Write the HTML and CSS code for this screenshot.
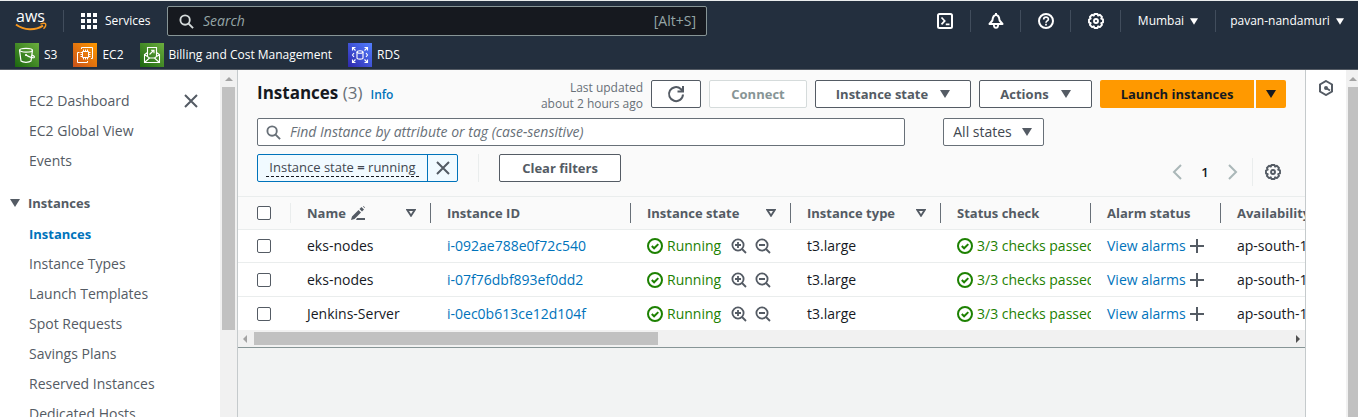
FILE: index.html
```html
<!DOCTYPE html>
<html lang="en">
<head>
<meta charset="utf-8">
<title>Instances | EC2 | Mumbai</title>
<link rel="stylesheet" href="styles.css">
</head>
<body>
<svg class="defs" aria-hidden="true">
  <symbol id="caret" viewBox="0 0 10 8"><path d="M0 0h10L5 8z" fill="currentColor"/></symbol>
  <symbol id="sort" viewBox="0 0 10 8"><path d="M1.300 1h7.400L5 6.800z" fill="none" stroke="currentColor" stroke-width="1.800"/></symbol>
  <symbol id="search" viewBox="0 0 16 16"><g fill="none" stroke="currentColor" stroke-width="2"><circle cx="6.500" cy="6.500" r="5"/><path d="M10.200 10.200 15 15"/></g></symbol>
  <symbol id="close" viewBox="0 0 16 16"><path d="m2 2 12 12M14 2 2 14" fill="none" stroke="currentColor" stroke-width="2"/></symbol>
  <symbol id="gear" viewBox="0 0 16 16"><g fill="none" stroke="currentColor"><path stroke-width="1.900" stroke-linejoin="round" d="M6.500 1h3l.6 1.600 1.700-.8 2.200 2.100-.8 1.700 1.800.8v3l-1.800.7.8 1.800-2.100 2.200-1.800-.8-.6 1.700h-3l-.7-1.700-1.700.8-2.200-2.200.8-1.800L1 9.500v-3l1.700-.8-.8-1.800 2.200-2.100 1.700.8z"/><circle cx="8" cy="8" r="2" stroke-width="1.900"/></g></symbol>
  <symbol id="ok" viewBox="0 0 16 16"><g fill="none" stroke="currentColor" stroke-width="2"><circle cx="8" cy="8" r="7"/><path d="m4.800 8 2.300 2.300 4.200-4.200"/></g></symbol>
  <symbol id="zoom-in" viewBox="0 0 16 16"><g fill="none" stroke="currentColor" stroke-width="1.800"><circle cx="7" cy="7" r="5.600"/><path d="m11 11 4 4M4 7h6M7 4v6"/></g></symbol>
  <symbol id="zoom-out" viewBox="0 0 16 16"><g fill="none" stroke="currentColor" stroke-width="1.800"><circle cx="7" cy="7" r="5.600"/><path d="m11 11 4 4M4 7h6"/></g></symbol>
  <symbol id="plus" viewBox="0 0 14 14"><path d="M7 0v14M0 7h14" fill="none" stroke="currentColor" stroke-width="2"/></symbol>
  <linearGradient id="green" x1="0" y1="1" x2="1" y2="0"><stop stop-color="#1b660f"/><stop offset="1" stop-color="#6cae3e"/></linearGradient>
  <linearGradient id="orange" x1="0" y1="1" x2="1" y2="0"><stop stop-color="#c8511b"/><stop offset="1" stop-color="#ff9900"/></linearGradient>
  <linearGradient id="blue" x1="0" y1="1" x2="1" y2="0"><stop stop-color="#2e27ad"/><stop offset="1" stop-color="#527fff"/></linearGradient>
</svg>

<header class="top">
  <div class="bar">
    <a class="logo" href="#" aria-label="AWS home">
      <svg width="34" height="24" viewBox="0 0 34 24"><text x="1" y="13" class="logo-text">aws</text><path d="M1 15.500c8 6 19 6.500 27 1.200" fill="none" stroke="#f7981f" stroke-width="2"/><path d="M25.500 15.200c2-1 4.500-1 5-.5.5 1-.4 3.500-2 5" fill="none" stroke="#f7981f" stroke-width="1.400"/></svg>
    </a>
    <span class="rule"></span>
    <button class="services">
      <svg width="16" height="16" viewBox="0 0 16 16" fill="#fff"><path d="M0 0h4v4H0zM6 0h4v4H6zM12 0h4v4h-4zM0 6h4v4H0zM6 6h4v4H6zM12 6h4v4h-4zM0 12h4v4H0zM6 12h4v4H6zM12 12h4v4h-4z"/></svg>
      Services
    </button>
    <label class="global-search">
      <svg width="15" height="15"><use href="#search"/></svg>
      <input type="search" placeholder="Search" aria-label="Search">
      <span>[Alt+S]</span>
    </label>
    <nav class="tools" aria-label="Account tools">
      <button class="tool" aria-label="CloudShell"><svg width="16" height="16" viewBox="0 0 16 16" fill="none" stroke="#fff" stroke-width="2"><rect x="1" y="1" width="14" height="14" rx="1.500"/><path d="m4.500 4.500 3.200 3.400-3.200 3.400M8.800 11.300h3.700" stroke-width="1.700"/></svg></button>
      <button class="tool" aria-label="Notifications"><svg width="16" height="16" viewBox="0 0 16 16" fill="none" stroke="#fff" stroke-width="2"><path d="M8 0v2M1.500 11h13L11.600 7.500C11.200 4 10.200 2 8 2S4.800 4 4.400 7.500z" stroke-linejoin="round"/><path d="M5.800 11.500c0 4.500 4.400 4.500 4.400 0" stroke-width="1.800"/></svg></button>
      <button class="tool" aria-label="Help"><svg width="16" height="16" viewBox="0 0 16 16" fill="none" stroke="#fff" stroke-width="2"><circle cx="8" cy="8" r="7"/><path d="M5.700 6.400c0-3 4.700-2.900 4.700-.2C10.400 8 8 7.800 8 9.700M8 10.800v1.700" stroke-width="1.700"/></svg></button>
      <button class="tool" aria-label="Settings"><svg width="16" height="16"><use href="#gear"/></svg></button>
      <button class="region">Mumbai <svg width="8" height="7"><use href="#caret"/></svg></button>
      <button class="account">pavan-nandamuri <svg width="8" height="7"><use href="#caret"/></svg></button>
    </nav>
  </div>
  <nav class="favorites" aria-label="Favorites">
    <a href="#"><svg width="24" height="24" viewBox="0 0 24 24" fill="none" stroke="#fff" stroke-width="1.200"><path stroke="none" fill="url(#green)" d="M0 0h24v24H0z"/><path d="M4.500 7.200 6 18c2 1.700 8 1.700 10 0l1.500-10.800"/><ellipse cx="11" cy="7.200" rx="6.500" ry="1.900"/><path d="M11 12c3 2 7.500 3.500 8.300 2.300.5-.9-1-1.700-2.400-2.200"/><circle cx="11" cy="12" r=".5"/></svg>S3</a>
    <a href="#"><svg width="24" height="24" viewBox="0 0 24 24" fill="none" stroke="#fff"><path stroke="none" fill="url(#orange)" d="M0 0h24v24H0z"/><path d="M9.500 8.500h6v6h-6zM10.500 6.500v2M12.500 6.500v2M14.500 6.500v2M10.500 14.500v2M12.500 14.500v2M14.500 14.500v2M7.500 9.500h2M7.500 11.500h2M7.500 13.500h2M15.500 9.500h2M15.500 11.500h2M15.500 13.500h2M8.500 6V4.500h11v11H18M6.500 9.500h-2v10h10V18"/></svg>EC2</a>
    <a href="#"><svg width="24" height="24" viewBox="0 0 24 24" fill="none" stroke="#fff" stroke-width="1.100"><path stroke="none" fill="url(#green)" d="M0 0h24v24H0z"/><path d="M7.500 13V4.500h9V13M7.500 9.500l-3 2v8h15v-8l-3-2M4.500 11.500l5 3.500h5l5-3.500M4.500 19.500l5-4.500M19.500 19.500l-5-4.500M9.500 11.500l4-4M11 7.200h3v3"/></svg>Billing and Cost Management</a>
    <a href="#"><svg width="24" height="24" viewBox="0 0 24 24" fill="none" stroke="#fff" stroke-width="1.100"><path stroke="none" fill="url(#blue)" d="M0 0h24v24H0z"/><path d="M4.500 7.500v-3h3M4.500 4.500l3 3M16.500 4.500h3v3M19.500 4.500l-3 3M4.500 16.500v3h3M4.500 19.500l3-3M19.500 16.500v3h-3M19.500 19.500l-3-3M6 10l-1.500 2L6 14M18 10l1.500 2-1.500 2M9 9v6c0 1.500 6 1.500 6 0V9"/><ellipse cx="12" cy="9" rx="3" ry="1.200"/></svg>RDS</a>
  </nav>
</header>

<div class="layout">
  <nav class="side" aria-label="EC2">
    <button class="side-close" aria-label="Close navigation"><svg width="16" height="16"><use href="#close"/></svg></button>
    <ul>
      <li><a href="#">EC2 Dashboard</a></li>
      <li><a href="#">EC2 Global View</a></li>
      <li><a href="#">Events</a></li>
    </ul>
    <button class="section"><svg width="10" height="8"><use href="#caret"/></svg>Instances</button>
    <ul>
      <li><a class="current" href="#">Instances</a></li>
      <li><a href="#">Instance Types</a></li>
      <li><a href="#">Launch Templates</a></li>
      <li><a href="#">Spot Requests</a></li>
      <li><a href="#">Savings Plans</a></li>
      <li><a href="#">Reserved Instances</a></li>
      <li><a href="#">Dedicated Hosts</a></li>
    </ul>
  </nav>
  <div class="vscroll"><svg width="8" height="4"><path d="M0 4h8L4 0z" fill="#a3a3a3"/></svg><div class="vthumb"></div></div>

  <main class="main">
    <section class="panel">
      <div class="panel-head">
        <div class="title-row">
          <h1>Instances <span>(3)</span></h1>
          <a class="info" href="#">Info</a>
          <p class="updated">Last updated<br>about 2 hours ago</p>
          <div class="actions">
            <button class="btn refresh" aria-label="Refresh"><svg width="18" height="18" viewBox="0 0 18 18" fill="none" stroke="currentColor" stroke-width="2"><path d="M16 9.500A7 7 0 1 1 13.800 4l1.700 1.600M16 1v5.500h-5.500"/></svg></button>
            <button class="btn connect" disabled>Connect</button>
            <button class="btn state">Instance state <svg width="10" height="8"><use href="#caret"/></svg></button>
            <button class="btn acts">Actions <svg width="10" height="8"><use href="#caret"/></svg></button>
            <div class="split">
              <button class="launch">Launch instances</button>
              <button class="launch-more" aria-label="More launch options"><svg width="10" height="8"><use href="#caret"/></svg></button>
            </div>
          </div>
        </div>
        <div class="search-row">
          <label class="find">
            <svg width="15" height="15"><use href="#search"/></svg>
            <input type="search" placeholder="Find Instance by attribute or tag (case-sensitive)" aria-label="Find Instance">
          </label>
          <div class="states">
            <select aria-label="Instance states"><option>All states</option></select>
            <svg width="10" height="8"><use href="#caret"/></svg>
          </div>
        </div>
        <div class="filter-row">
          <div class="token">
            <button class="token-text"><span>Instance state <b>=</b> running</span></button>
            <button class="token-x" aria-label="Remove filter"><svg width="16" height="16"><use href="#close"/></svg></button>
          </div>
          <span class="split-line"></span>
          <button class="btn clear">Clear filters</button>
          <nav class="pages" aria-label="Pagination">
            <button aria-label="Previous page" disabled><svg width="10" height="16" viewBox="0 0 10 16" fill="none" stroke="#aab7b8" stroke-width="2"><path d="M9 1 2 8l7 7"/></svg></button>
            <button class="page">1</button>
            <button aria-label="Next page" disabled><svg width="10" height="16" viewBox="0 0 10 16" fill="none" stroke="#aab7b8" stroke-width="2"><path d="m1 1 7 7-7 7"/></svg></button>
            <span class="split-line"></span>
            <button aria-label="Preferences"><svg width="16" height="16"><use href="#gear"/></svg></button>
          </nav>
        </div>
      </div>

      <div class="table-wrap">
        <table>
          <colgroup><col class="c-check"><col class="c-name"><col class="c-id"><col class="c-state"><col class="c-type"><col class="c-status"><col class="c-alarm"><col class="c-zone"></colgroup>
          <thead>
            <tr>
              <th><div class="th pale"><input type="checkbox" aria-label="Select all"></div></th>
              <th><div class="th">Name <svg class="pen" width="14" height="14" viewBox="0 0 14 14"><path d="m0 14 1-3.500L7.500 4 10 6.500 3.500 13zM8.500 3l2-2L13 3.500l-2 2zM12.500 0 14 1.500l-.5.5L12 .5zM6 12h8v2H5z" fill="currentColor"/></svg><svg class="sort" width="10" height="8"><use href="#sort"/></svg></div></th>
              <th><div class="th">Instance ID</div></th>
              <th><div class="th">Instance state<svg class="sort" width="10" height="8"><use href="#sort"/></svg></div></th>
              <th><div class="th">Instance type<svg class="sort" width="10" height="8"><use href="#sort"/></svg></div></th>
              <th><div class="th">Status check</div></th>
              <th><div class="th">Alarm status</div></th>
              <th><div class="th">Availability Zone</div></th>
            </tr>
          </thead>
          <tbody>
            <tr>
              <td><input type="checkbox" aria-label="Select i-092ae788e0f72c540"></td>
              <td>eks-nodes</td>
              <td><a href="#">i-092ae788e0f72c540</a></td>
              <td><div class="cell"><svg class="good" width="16" height="16"><use href="#ok"/></svg><span class="good">Running</span><button aria-label="Filter for value"><svg width="16" height="16"><use href="#zoom-in"/></svg></button><button aria-label="Filter out value"><svg width="16" height="16"><use href="#zoom-out"/></svg></button></div></td>
              <td>t3.large</td>
              <td><div class="cell clip good"><svg width="16" height="16"><use href="#ok"/></svg><span>3/3 checks passed</span></div></td>
              <td><div class="cell"><a href="#">View alarms</a><button aria-label="Create alarm"><svg width="14" height="14"><use href="#plus"/></svg></button></div></td>
              <td>ap-south-1b</td>
            </tr>
            <tr>
              <td><input type="checkbox" aria-label="Select i-07f76dbf893ef0dd2"></td>
              <td>eks-nodes</td>
              <td><a href="#">i-07f76dbf893ef0dd2</a></td>
              <td><div class="cell"><svg class="good" width="16" height="16"><use href="#ok"/></svg><span class="good">Running</span><button aria-label="Filter for value"><svg width="16" height="16"><use href="#zoom-in"/></svg></button><button aria-label="Filter out value"><svg width="16" height="16"><use href="#zoom-out"/></svg></button></div></td>
              <td>t3.large</td>
              <td><div class="cell clip good"><svg width="16" height="16"><use href="#ok"/></svg><span>3/3 checks passed</span></div></td>
              <td><div class="cell"><a href="#">View alarms</a><button aria-label="Create alarm"><svg width="14" height="14"><use href="#plus"/></svg></button></div></td>
              <td>ap-south-1b</td>
            </tr>
            <tr>
              <td><input type="checkbox" aria-label="Select i-0ec0b613ce12d104f"></td>
              <td>Jenkins-Server</td>
              <td><a href="#">i-0ec0b613ce12d104f</a></td>
              <td><div class="cell"><svg class="good" width="16" height="16"><use href="#ok"/></svg><span class="good">Running</span><button aria-label="Filter for value"><svg width="16" height="16"><use href="#zoom-in"/></svg></button><button aria-label="Filter out value"><svg width="16" height="16"><use href="#zoom-out"/></svg></button></div></td>
              <td>t3.large</td>
              <td><div class="cell clip good"><svg width="16" height="16"><use href="#ok"/></svg><span>3/3 checks passed</span></div></td>
              <td><div class="cell"><a href="#">View alarms</a><button aria-label="Create alarm"><svg width="14" height="14"><use href="#plus"/></svg></button></div></td>
              <td>ap-south-1b</td>
            </tr>
          </tbody>
        </table>
      </div>
      <div class="hscroll"><svg width="4" height="8"><path d="M4 0v8L0 4z" fill="#a3a3a3"/></svg><div class="htrack"><div class="hthumb"></div></div><svg width="4" height="8"><path d="M0 0v8l4-4z" fill="#505050"/></svg></div>
    </section>
  </main>

  <aside class="rail">
    <button aria-label="Open tools"><svg width="16" height="16" viewBox="0 0 16 16" fill="none" stroke="#545b64" stroke-width="2"><path d="M8 1l6 3.500v7L8 15l-6-3.500v-7z"/><circle cx="8" cy="8" r="1"/><path d="m8 8 4 2.500"/></svg></button>
  </aside>
  <div class="vscroll page-scroll"><svg width="8" height="4"><path d="M0 4h8L4 0z" fill="#a3a3a3"/></svg><div class="vthumb"></div></div>
</div>
</body>
</html>
```

FILE: styles.css
```css
* { box-sizing: border-box; }
body {
  margin: 0;
  height: 100vh;
  display: flex;
  flex-direction: column;
  overflow: hidden;
  font: 13px/20px "Open Sans", "Noto Sans", sans-serif;
  color: #16191f;
  background: #f2f3f3;
}
button, input, select { font: inherit; color: inherit; margin: 0; }
button { background: none; border: 0; padding: 0; cursor: pointer; }
a { color: #0073bb; text-decoration: none; }
svg { display: block; flex: none; }
ul { list-style: none; margin: 0; padding: 0; }
h1, p { margin: 0; }
input[type="search"] { appearance: none; border: 0; outline: 0; background: none; padding: 0; flex: 1; min-width: 0; font-size: 14px; }
input[type="search"]::placeholder { font-style: italic; color: #687078; opacity: 1; }
input[type="checkbox"] { appearance: none; display: block; width: 14px; height: 14px; border: 1px solid #545b64; border-radius: 2px; background: #fff; }
.defs { position: absolute; width: 0; height: 0; }

/* Global header */
.top { flex: none; background: #232f3e; color: #fff; border-top: 1px solid #eaeded; border-bottom: 1px solid #545b64; }
.bar { display: flex; align-items: center; height: 40px; }
.logo { margin-left: 15px; width: 48px; }
.logo-text { font: 500 16px "Open Sans", sans-serif; fill: #fff; }
.rule { width: 1px; height: 22px; background: #414d5c; }
.services { display: flex; align-items: center; gap: 8px; margin-left: 17px; width: 86px; font-weight: 500; font-size: 12px; }
.global-search { display: flex; align-items: center; flex: 0 1 540px; height: 30px; padding: 0 10px 0 11px; gap: 9px; border: 1px solid #879596; border-radius: 2px; background: #16191f; color: #d5dbdb; }
.global-search input::placeholder { color: #95a5a6; }
.global-search span { color: #95a5a6; font-size: 14px; }
.tools { display: flex; align-items: center; margin-left: auto; }
.tools button { display: flex; align-items: center; justify-content: center; height: 22px; border-left: 1px solid #414d5c; }
.tools .tool { width: 50px; }
.tools .tool:first-child { border-left: 0; }
.region, .account { font-size: 12px; gap: 6px; }
.tools .region { width: 95px; }
.tools .account { width: 143px; }
.favorites { display: flex; gap: 16px; padding: 2px 15px 2px; }
.favorites a { display: flex; align-items: center; gap: 5px; color: #fff; font-size: 12px; font-weight: 500; }

/* Page columns */
.layout { flex: 1; min-height: 0; display: flex; }
.side { position: relative; flex: 0 0 220px; overflow: hidden; background: #fff; padding-top: 16px; color: #545b64; }
.side a { display: block; padding: 5px 29px; color: #545b64; font-size: 14px; }
.side a.current { color: #0073bb; font-size: 13px; font-weight: 700; }
.side-close { position: absolute; top: 23px; right: 21px; color: #545b64; }
.section { display: flex; align-items: center; gap: 8px; padding: 17px 10px 6px; font-weight: 700; line-height: 20px; }
.vscroll { flex: 0 0 17px; display: flex; flex-direction: column; align-items: center; gap: 6px; padding-top: 7px; background: #f1f1f1; }
.vthumb { width: 13px; height: 243px; background: #c1c1c1; }
.page-scroll { flex-basis: 12px; padding-left: 2px; overflow: hidden; }
.page-scroll .vthumb { flex: 1; width: 100%; }
.main { flex: 1; min-width: 0; border: solid #c5cacc; border-width: 0 1px; overflow: hidden; }
.rail { flex: 0 0 40px; background: #fff; padding: 10px 0 0 12px; }

/* Instances panel */
.panel { border-bottom: 1px solid #879596; }
.panel-head { background: #fafafa; padding: 10px 19px 10px; border-bottom: 1px solid #eaeded; }
.title-row { display: flex; height: 38px; }
h1 { font-size: 17px; line-height: 26px; font-weight: 700; }
h1 span { color: #687078; font-weight: 400; }
.info { margin-left: 8px; font-size: 12px; line-height: 30px; font-weight: 600; }
.updated { margin-left: auto; font-size: 12px; line-height: 16px; color: #687078; text-align: right; }
.actions { display: flex; gap: 8px; margin-left: 8px; }
.btn { display: flex; align-items: center; justify-content: center; gap: 12px; height: 28px; border: 1px solid #545b64; border-radius: 2px; background: #fff; color: #545b64; font-weight: 700; white-space: nowrap; }
.btn:disabled { border-color: #d5dbdb; color: #879596; }
.refresh { width: 50px; }
.connect { width: 98px; }
.state { width: 156px; }
.acts { width: 113px; }
.split { display: flex; gap: 2px; }
.split button { display: flex; align-items: center; justify-content: center; height: 28px; background: #ff9900; color: #16191f; font-weight: 700; white-space: nowrap; }
.split .launch { width: 154px; border-radius: 2px 0 0 2px; }
.split .launch-more { width: 30px; border-radius: 0 2px 2px 0; }
.search-row { display: flex; gap: 38px; margin-bottom: 8px; }
.find { flex: 0 1 63%; display: flex; align-items: center; gap: 9px; height: 28px; padding: 0 8px; border: 1px solid #687078; border-radius: 2px; background: #fff; color: #687078; }
.states { position: relative; }
.states select { appearance: none; width: 101px; height: 28px; padding: 0 9px; border: 1px solid #687078; border-radius: 2px; background: #fff; color: #414750; font-size: 14px; }
.states svg { position: absolute; right: 12px; top: 10px; color: #545b64; pointer-events: none; }
.filter-row { display: flex; height: 32px; }
.token { display: flex; height: 28px; border: 1px solid #0073bb; border-radius: 2px; background: #f1faff; color: #414750; }
.token-text { width: 169px; }
.token-text span { display: block; margin: 0 8px; line-height: 17px; border-bottom: 1px dashed #16191f; white-space: nowrap; }
.token-x { width: 30px; display: flex; align-items: center; justify-content: center; border-left: 1px solid #0073bb; color: #545b64; }
.split-line { width: 1px; height: 28px; background: #eaeded; margin: 0 20px; }
.clear { width: 122px; }
.pages { display: flex; align-items: center; gap: 18px; height: 28px; margin: 4px 5px 0 auto; color: #545b64; }
.pages .page { width: 10px; color: #16191f; font-weight: 600; }
.pages .split-line { margin: 0 -6px 0 -4px; }

/* Table */
.table-wrap { overflow: hidden; background: #fff; }
table { table-layout: fixed; width: 1133px; border-collapse: separate; border-spacing: 0; }
.c-check { width: 53px; }
.c-name { width: 140px; }
.c-id { width: 200px; }
.c-state { width: 160px; }
.c-type, .c-status, .c-zone { width: 150px; }
.c-alarm { width: 130px; }
th { padding: 0; height: 33px; background: #fafafa; border-bottom: 1px solid #eaeded; color: #545b64; text-align: left; font-weight: 700; }
.th { display: flex; align-items: center; height: 20px; padding: 0 14px 0 16px; border-right: 1px solid #687078; white-space: nowrap; }
.th.pale { border-color: #eaeded; }
.th .pen { margin-left: 5px; }
.th .sort { margin-left: auto; color: #545b64; }
td { height: 33px; padding: 0 0 0 16px; border-bottom: 1px solid #eaeded; white-space: nowrap; font-size: 14px; }
th:first-child .th, td:first-child { padding-left: 19px; }
tbody tr:nth-child(2) td { height: 34px; }
tbody tr:last-child td { border-bottom: 0; }
.cell { display: flex; align-items: center; gap: 4px; }
.cell button { color: #545b64; }
.cell span + button { margin: 0 4px 0 6px; }
.clip { overflow: hidden; }
.good { color: #1d8102; }
.hscroll { display: flex; align-items: center; height: 17px; padding: 0 5px; background: #f1f1f1; }
.htrack { flex: 1; margin: 0 7px; }
.hthumb { width: 39%; height: 13px; background: #c1c1c1; }
```
